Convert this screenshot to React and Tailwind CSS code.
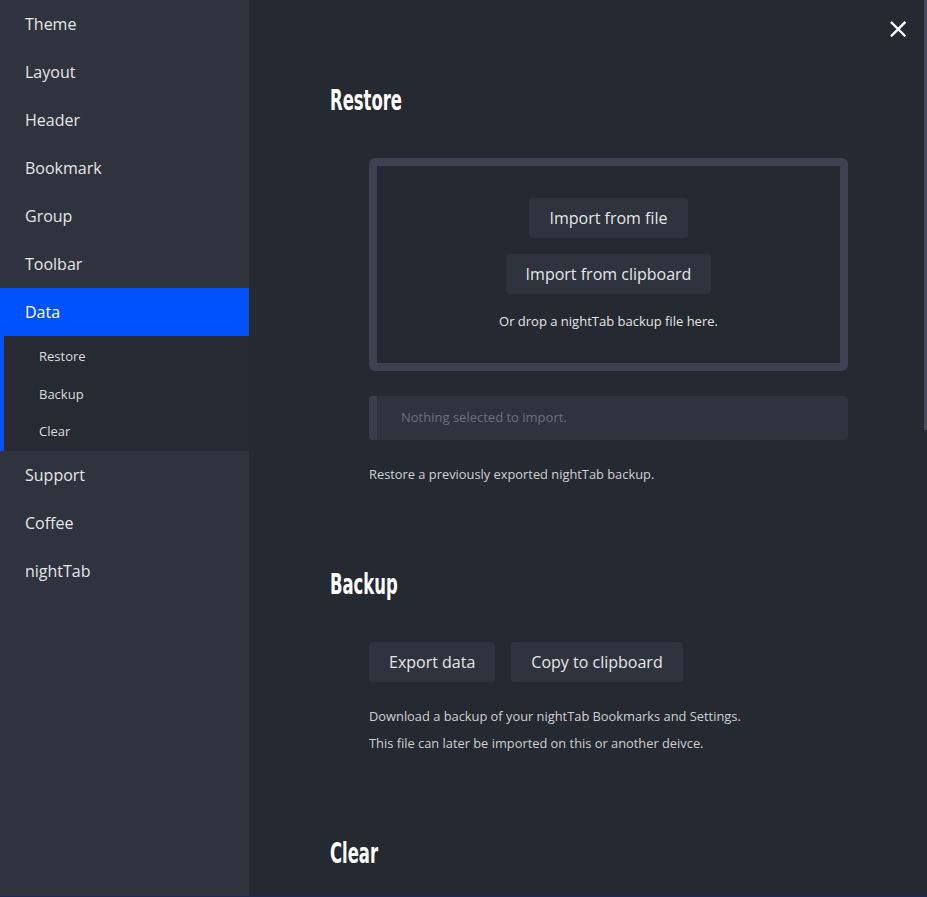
import React from 'react';

const navTop = ['Theme', 'Layout', 'Header', 'Bookmark', 'Group', 'Toolbar'];
const navBottom = ['Support', 'Coffee', 'nightTab'];
const subItems = ['Restore', 'Backup', 'Clear'];

// condensed display heading (no Fjalla One offline, so squeeze DejaVu)
const Heading = ({ children, className = '' }) => (
  <h2 className={`h-8 flex items-center ${className}`}>
    <span className="inline-block origin-left scale-x-[0.63] text-[29px] leading-8 font-bold text-white [font-stretch:condensed] [font-family:'DejaVu_Sans',sans-serif]">
      {children}
    </span>
  </h2>
);

const button = "h-10 px-5 rounded bg-[#2f333e] text-base text-[#e6e6e6] flex items-center";
const small = "text-[12.85px] leading-5 text-[#d0d0d0]";

const Sidebar = () => (
  <aside className="w-[249px] shrink-0 bg-[#2f333e] flex flex-col">
    {navTop.map((name) => (
      <div key={name} className="h-12 flex items-center pl-[25px] text-base text-[#e6e6e6]">
        {name}
      </div>
    ))}
    <div className="h-12 flex items-center pl-[25px] text-base text-white bg-[#0052ff]">Data</div>
    <div className="h-[115px] pt-[2px] flex flex-col bg-[#262a33] border-l-4 border-[#0052ff]">
      {subItems.map((name) => (
        <div key={name} className="flex-1 flex items-center pl-[35px] text-[13px] text-[#dcdcdc]">
          {name}
        </div>
      ))}
    </div>
    {navBottom.map((name) => (
      <div key={name} className="h-12 flex items-center pl-[25px] text-base text-[#e6e6e6]">
        {name}
      </div>
    ))}
  </aside>
);

export default function App() {
  return (
    <div className="h-[897px] w-[927px] flex overflow-hidden bg-[#252932] border-b border-[#1b2a5c] [font-family:'Open_Sans',sans-serif]">
      <Sidebar />

      {/* Main panel */}
      <main className="flex-1 flex flex-col">
        <div className="flex justify-end h-0 pr-[18px]">
          <svg width="16" height="16" viewBox="0 0 16 16" className="text-white mt-[21px] shrink-0">
            <path d="M1.8 1.8 L14.5 14.5 M14.5 1.8 L1.8 14.5" stroke="currentColor" strokeWidth="2.4" strokeLinecap="square" />
          </svg>
        </div>

        <div className="ml-[81px] w-[518px] pt-[84px]">
          {/* Restore */}
          <Heading>Restore</Heading>
          <div className="pl-[39px] mt-[42px]">
            <div className="border-8 border-[#3d4150] rounded-md p-8 flex flex-col items-center gap-4">
              <button className={button}>Import from file</button>
              <button className={button}>Import from clipboard</button>
              <p className="text-[13px] leading-5 text-[#e6e6e6] mt-px">Or drop a nightTab backup file here.</p>
            </div>
            <div className="mt-[25px] h-11 rounded bg-[#2f333e] border-l-8 border-[#3a3e4a] flex items-center pl-6 text-[13px] text-[#6b7080]">
              Nothing selected to import.
            </div>
            <p className={`mt-6 ${small}`}>Restore a previously exported nightTab backup.</p>
          </div>

          {/* Backup */}
          <Heading className="mt-[84px]">Backup</Heading>
          <div className="pl-[39px] mt-[42px]">
            <div className="flex gap-4">
              <button className={button}>Export data</button>
              <button className={button}>Copy to clipboard</button>
            </div>
            <p className={`mt-6 ${small}`}>Download a backup of your nightTab Bookmarks and Settings.</p>
            <p className={`mt-[7px] ${small}`}>This file can later be imported on this or another deivce.</p>
          </div>

          {/* Clear */}
          <Heading className="mt-[84px]">Clear</Heading>
        </div>
      </main>

      {/* Scrollbar */}
      <div className="w-[3px] shrink-0 flex flex-col bg-[#262a33]">
        <div className="h-[430px] bg-[#454a59]" />
      </div>
    </div>
  );
}
